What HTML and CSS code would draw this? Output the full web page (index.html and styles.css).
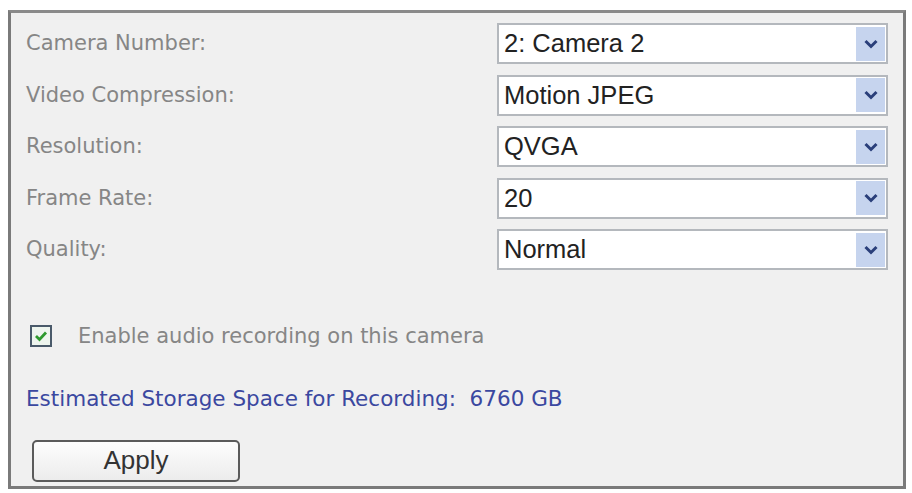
FILE: index.html
```html
<!DOCTYPE html>
<html>
<head>
<meta charset="utf-8">
<link rel="stylesheet" href="styles.css">
</head>
<body>
<div class="panel">
  <div class="row"><span class="label">Camera Number:</span><div class="select"><span class="val">2: Camera 2</span><span class="arrow"><svg width="16" height="12" viewBox="0 0 16 12"><path d="M2.5 3 L8 8.5 L13.5 3" fill="none" stroke="#2a3f7a" stroke-width="3"/></svg></span></div></div>
  <div class="row"><span class="label">Video Compression:</span><div class="select"><span class="val">Motion JPEG</span><span class="arrow"><svg width="16" height="12" viewBox="0 0 16 12"><path d="M2.5 3 L8 8.5 L13.5 3" fill="none" stroke="#2a3f7a" stroke-width="3"/></svg></span></div></div>
  <div class="row"><span class="label">Resolution:</span><div class="select"><span class="val">QVGA</span><span class="arrow"><svg width="16" height="12" viewBox="0 0 16 12"><path d="M2.5 3 L8 8.5 L13.5 3" fill="none" stroke="#2a3f7a" stroke-width="3"/></svg></span></div></div>
  <div class="row"><span class="label">Frame Rate:</span><div class="select"><span class="val">20</span><span class="arrow"><svg width="16" height="12" viewBox="0 0 16 12"><path d="M2.5 3 L8 8.5 L13.5 3" fill="none" stroke="#2a3f7a" stroke-width="3"/></svg></span></div></div>
  <div class="row"><span class="label">Quality:</span><div class="select"><span class="val">Normal</span><span class="arrow"><svg width="16" height="12" viewBox="0 0 16 12"><path d="M2.5 3 L8 8.5 L13.5 3" fill="none" stroke="#2a3f7a" stroke-width="3"/></svg></span></div></div>
  <div class="check-row"><span class="checkbox"><svg width="14" height="12" viewBox="0 0 14 12"><path d="M2 6 L5.5 9.5 L12 2.5" fill="none" stroke="#2e9a2e" stroke-width="2.8"/></svg></span><span class="check-label">Enable audio recording on this camera</span></div>
  <div class="estimate">Estimated Storage Space for Recording:&nbsp; 6760 GB</div>
  <div class="btn-row"><button class="apply">Apply</button></div>
</div>
</body>
</html>
```
FILE: styles.css
```css
html, body { margin: 0; padding: 0; background: #ffffff; }
body { padding: 10px 0 0 8px; }
.panel {
  width: 898px;
  height: 479px;
  box-sizing: border-box;
  border: 3px solid #7a7a7a;
  border-top-color: #8a8a8a;
  background: #f0f0f0;
  padding: 10px 15px 0 15px;
  display: flex;
  flex-direction: column;
  font-family: "DejaVu Sans", Verdana, sans-serif;
}
.row {
  display: flex;
  align-items: center;
  justify-content: space-between;
  height: 41px;
  margin-bottom: 10.5px;
}
.label {
  color: #868686;
  font-size: 21px;
  line-height: 25px;
}
.select {
  width: 391px;
  height: 41px;
  box-sizing: border-box;
  border: 2px solid #b4b8bd;
  background: #ffffff;
  display: flex;
  align-items: center;
  justify-content: space-between;
  padding: 2px 1px 2px 5px;
}
.val {
  font-family: "Liberation Sans", Arial, sans-serif;
  font-size: 25.5px;
  color: #222;
}
.arrow {
  width: 29px;
  height: 34px;
  background: #c6d4ee;
  display: flex;
  align-items: center;
  justify-content: center;
}
.check-row {
  display: flex;
  align-items: center;
  height: 25px;
  margin-top: 43px;
  padding-left: 4px;
}
.checkbox {
  width: 22px;
  height: 22px;
  box-sizing: border-box;
  border: 2px solid #4a5a6a;
  background: #eef5ee;
  display: flex;
  align-items: center;
  justify-content: center;
}
.check-label {
  color: #868686;
  font-size: 21px;
  line-height: 25px;
  margin-left: 26px;
}
.estimate {
  margin-top: 37px;
  color: #3b48a0;
  font-size: 21.5px;
  line-height: 25px;
}
.btn-row { margin-top: 29px; padding-left: 6px; }
.apply {
  display: block;
  width: 208px;
  height: 42px;
  border: 2px solid #5b5b5b;
  border-radius: 5px;
  background: linear-gradient(#fdfdfd, #ececec);
  font-family: "Liberation Sans", Arial, sans-serif;
  font-size: 26px;
  color: #333;
  padding: 0;
}
```
